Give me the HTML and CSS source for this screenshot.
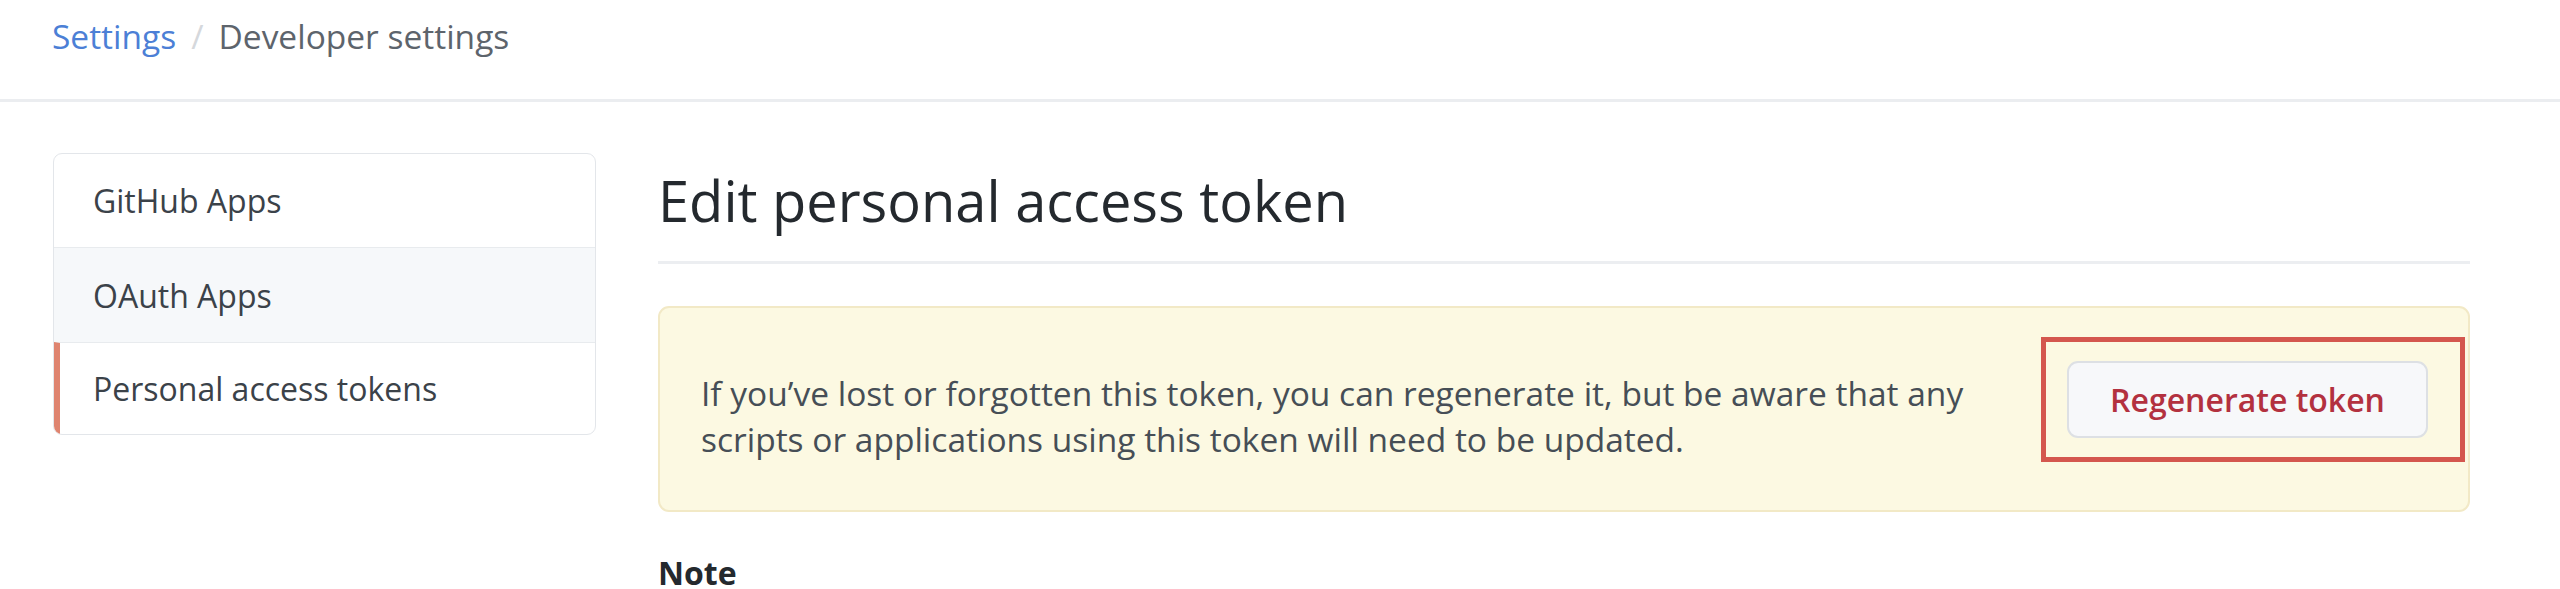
FILE: index.html
```html
<!DOCTYPE html>
<html lang="en">
<head>
<meta charset="utf-8">
<title>Edit personal access token</title>
<link rel="stylesheet" href="styles.css">
</head>
<body>
<header class="header">
  <nav class="crumbs">
    <a class="crumb-link" href="#">Settings</a>
    <span class="crumb-sep">/</span>
    <span class="crumb-current">Developer settings</span>
  </nav>
</header>
<div class="main">
  <aside class="menu">
    <a class="menu-item" href="#">GitHub Apps</a>
    <a class="menu-item menu-item-hover" href="#">OAuth Apps</a>
    <a class="menu-item menu-item-selected" href="#">Personal access tokens</a>
  </aside>
  <section class="content">
    <div class="subhead">
      <h2 class="subhead-heading">Edit personal access token</h2>
    </div>
    <div class="flash">
      <p class="flash-text">If you’ve lost or forgotten this token, you can regenerate it, but be aware that any scripts or applications using this token will need to be updated.</p>
      <div class="highlight">
        <button class="btn-danger" type="button">Regenerate token</button>
      </div>
    </div>
    <h3 class="note">Note</h3>
  </section>
</div>
</body>
</html>
```
FILE: styles.css
```css
html, body {
  margin: 0;
  padding: 0;
  background: #ffffff;
}
body {
  font-family: "Open Sans", "Noto Sans", "Liberation Sans", sans-serif;
  color: #24292e;
  overflow: hidden;
  height: 589px;
}
.header {
  height: 102px;
  box-sizing: border-box;
  padding: 14px 0 0 52px;
  border-bottom: 3px solid #ebedf0;
}
.crumbs {
  display: flex;
  align-items: center;
  font-size: 33.5px;
  line-height: 44px;
}
.crumb-link {
  color: #4c7fd6;
  text-decoration: none;
}
.crumb-sep {
  color: #d5d8dc;
  margin: 0 15px;
}
.crumb-current {
  color: #5d646c;
}
.main {
  display: flex;
  align-items: flex-start;
  padding: 0 90px 0 53px;
  gap: 62px;
}
.menu {
  width: 541px;
  flex: none;
  margin-top: 51px;
  border: 1px solid #e3e6ea;
  border-radius: 9px;
  overflow: hidden;
  display: flex;
  flex-direction: column;
}
.menu-item {
  display: flex;
  align-items: center;
  height: 95px;
  box-sizing: border-box;
  padding-left: 39px;
  font-size: 32px;
  color: #3b4249;
  text-decoration: none;
  border-top: 1px solid #e8ebee;
}
.menu-item:first-child {
  border-top: 0;
  height: 93px;
}
.menu-item-hover {
  background: #f6f8fa;
}
.menu-item-selected {
  border-left: 6px solid #df846f;
  padding-left: 33px;
  height: 92px;
}
.content {
  flex: 1;
  min-width: 0;
}
.subhead {
  margin-top: 58px;
  padding-bottom: 21px;
  border-bottom: 3px solid #eceef1;
}
.subhead-heading {
  margin: 0;
  font-size: 56px;
  line-height: 80px;
  font-weight: 400;
  color: #24292e;
}
.flash {
  margin-top: 42px;
  height: 206px;
  box-sizing: border-box;
  display: flex;
  align-items: center;
  justify-content: space-between;
  padding: 0 3px 0 41px;
  background: #fcf9e2;
  border: 2px solid #f2e9c6;
  border-radius: 11px;
}
.flash-text {
  margin: 14px 0 0 0;
  width: 1310px;
  font-size: 33.5px;
  line-height: 46px;
  color: #464e56;
}
.highlight {
  margin-bottom: 20px;
  border: 5px solid #d4574e;
  padding: 19px 32px 19px 21px;
  display: flex;
}
.btn-danger {
  width: 361px;
  height: 77px;
  box-sizing: border-box;
  font-family: inherit;
  font-size: 32px;
  font-weight: 600;
  color: #b3313f;
  background: #f7f8fa;
  border: 2px solid #dde0e4;
  border-radius: 11px;
  padding: 0;
}
.note {
  margin: 41px 0 0 0;
  font-size: 32px;
  line-height: 40px;
  font-weight: 700;
  color: #24292e;
}
```
